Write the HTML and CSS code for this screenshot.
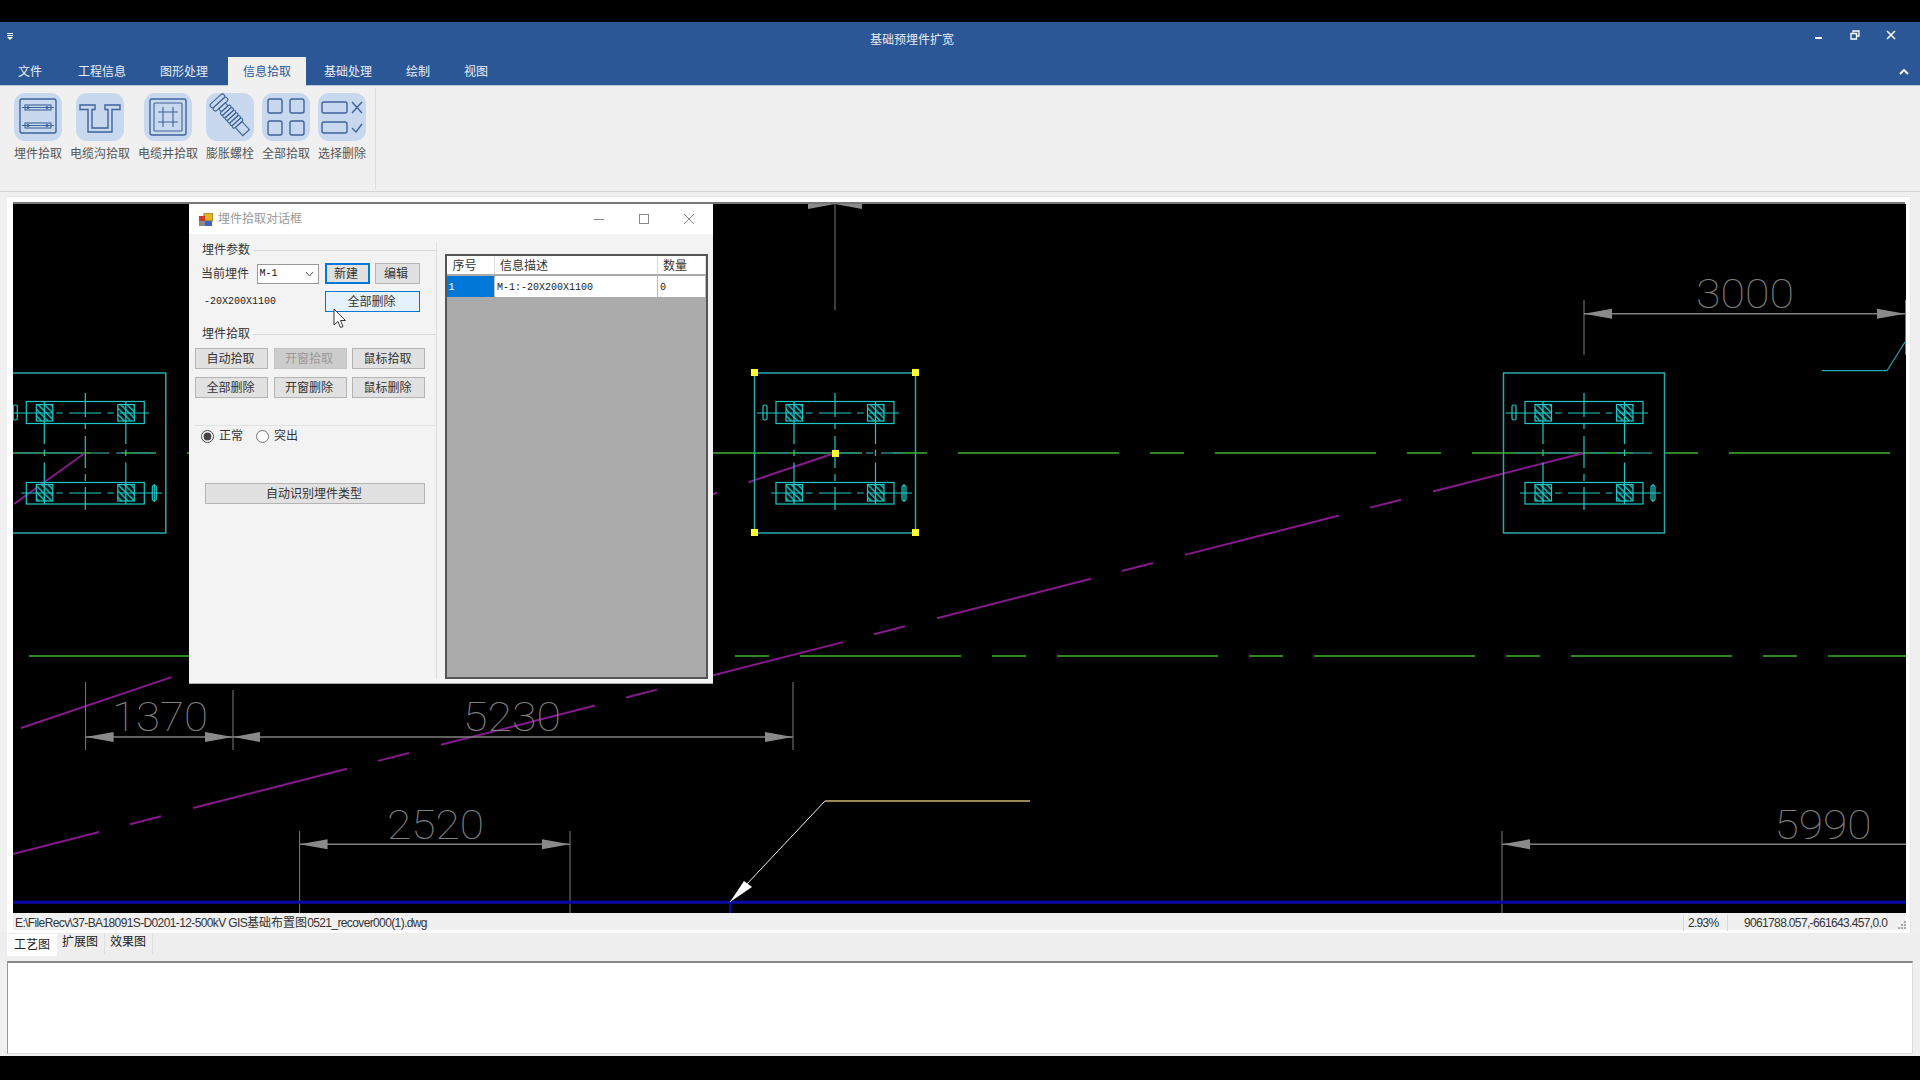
FILE: index.html
```html
<!DOCTYPE html>
<html lang="zh-CN">
<head>
<meta charset="utf-8">
<title>基础预埋件扩宽</title>
<link rel="stylesheet" href="styles.css">
</head>
<body>
<div class="app">
  <header class="titlebar">
    <svg class="qat" width="8" height="8" viewBox="0 0 8 8"><path d="M1 0.5H7M1 2.5H7" stroke="#fff"/><path d="M1 4H7L4 7Z" fill="#fff"/></svg>
    <div class="apptitle">基础预埋件扩宽</div>
    <div class="winctl">
      <svg width="10" height="10" viewBox="0 0 10 10"><path d="M1 8H8" stroke="#fff" stroke-width="2"/></svg>
      <svg width="10" height="10" viewBox="0 0 10 10"><path d="M3 2.5V1H9V6H7M1 3.5H6.5V9H1Z" fill="none" stroke="#fff" stroke-width="1.3"/></svg>
      <svg width="10" height="10" viewBox="0 0 10 10"><path d="M1 1L9 9M9 1L1 9" stroke="#fff" stroke-width="1.5"/></svg>
    </div>
  </header>
  <nav class="tabs">
    <span class="tab t1">文件</span>
    <span class="tab t2">工程信息</span>
    <span class="tab t3">图形处理</span>
    <span class="tab active">信息拾取</span>
    <span class="tab t5">基础处理</span>
    <span class="tab t6">绘制</span>
    <span class="tab t7">视图</span>
    <svg class="collapse" width="10" height="6" viewBox="0 0 10 6"><path d="M1 5L5 1L9 5" fill="none" stroke="#fff" stroke-width="2"/></svg>
  </nav>
  <section class="ribbon">
    <div class="rgroup">
      <div class="ritem">
        <svg class="ricon" viewBox="0 0 48 48"><rect class="ibg" width="48" height="48" rx="11"/><rect class="ist" x="6" y="6" width="36" height="34" rx="2"/><rect class="ist1" x="11" y="12" width="26" height="5"/><path class="ist1" d="M8 14.500H40M8 32.500H40"/><rect class="ist1" x="11" y="30" width="26" height="5"/><circle class="idot" cx="14" cy="14.500" r="1.500"/><circle class="idot" cx="33" cy="14.500" r="1.500"/><circle class="idot" cx="14" cy="32.500" r="1.500"/><circle class="idot" cx="33" cy="32.500" r="1.500"/></svg>
        <span class="rlabel">埋件拾取</span>
      </div>
      <div class="ritem">
        <svg class="ricon" viewBox="0 0 48 48"><rect class="ibg" width="48" height="48" rx="11"/><path class="ist" d="M4 12H19V16.500H16V35H32V16.500H29V12H44V16.500H36V39H12V16.500H4Z"/></svg>
        <span class="rlabel">电缆沟拾取</span>
      </div>
      <div class="ritem">
        <svg class="ricon" viewBox="0 0 48 48"><rect class="ibg" width="48" height="48" rx="11"/><rect class="ist" x="6" y="6" width="36" height="36" rx="2"/><rect class="ist1" x="10" y="10" width="28" height="28" rx="1"/><path class="ist1" d="M19 14V34M29 14V34M14 19H34M14 29H34"/></svg>
        <span class="rlabel">电缆井拾取</span>
      </div>
      <div class="ritem">
        <svg class="ricon" viewBox="0 0 48 48"><rect class="ibg" width="48" height="48" rx="11"/><g transform="translate(26 24) rotate(48)"><rect class="ist1" x="-24" y="-9" width="4.500" height="18" rx="2.200"/><rect class="ist1" x="-19.500" y="-9" width="4.500" height="18" rx="2.200"/><rect class="ist1" x="-15" y="-4.500" width="4" height="9"/><rect class="ist1" x="-11" y="-6.500" width="3.500" height="13" rx="1.700"/><rect class="ist1" x="-7.500" y="-6.500" width="3.500" height="13" rx="1.700"/><rect class="ist1" x="-4" y="-6.500" width="3.500" height="13" rx="1.700"/><rect class="ist1" x="-0.500" y="-6.500" width="3.500" height="13" rx="1.700"/><rect class="ist1" x="3" y="-6.500" width="3.500" height="13" rx="1.700"/><rect class="ist1" x="6.500" y="-6.500" width="3.500" height="13" rx="1.700"/><rect class="ist1" x="10" y="-4.500" width="11" height="9"/></g></svg>
        <span class="rlabel">膨胀螺栓</span>
      </div>
      <div class="ritem">
        <svg class="ricon" viewBox="0 0 48 48"><rect class="ibg" width="48" height="48" rx="11"/><rect class="ist" x="6" y="6" width="14" height="14" rx="2"/><rect class="ist" x="28" y="6" width="14" height="14" rx="2"/><rect class="ist" x="6" y="28" width="14" height="14" rx="2"/><rect class="ist" x="28" y="28" width="14" height="14" rx="2"/></svg>
        <span class="rlabel">全部拾取</span>
      </div>
      <div class="ritem">
        <svg class="ricon" viewBox="0 0 48 48"><rect class="ibg" width="48" height="48" rx="11"/><rect class="ist" x="4" y="9" width="25" height="11" rx="2"/><rect class="ist" x="4" y="29" width="25" height="11" rx="2"/><path class="ist" d="M34 9L44 20M44 9L34 20M34 35L38 39L44 31"/></svg>
        <span class="rlabel">选择删除</span>
      </div>
    </div>
  </section>
  <main class="panel">
    <div class="stage">
      <svg class="cad" viewBox="13 204 1893 709" width="1893" height="709">
        <defs>
          <pattern id="hatch" width="4.500" height="4.500" patternUnits="userSpaceOnUse" patternTransform="rotate(-45)">
            <rect width="4.500" height="4.500" fill="#021414"/>
            <rect width="1.500" height="4.500" fill="#1ab4b4"/>
          </pattern>
          <g id="block">
            <path class="grn-ov" d="M-68 0H-46M-38 0H-6M6 0H24M31 0H38M46 0H68"/>
            <rect class="cy-o" x="-80.500" y="-80" width="161" height="160"/>
            <rect class="cy" x="-59" y="-51.500" width="118" height="22"/>
            <rect class="cy" x="-59" y="29.500" width="118" height="21.500"/>
            <rect class="hat" x="-49" y="-48.500" width="16.500" height="16.500"/>
            <rect class="hat" x="32.500" y="-48.500" width="16.500" height="16.500"/>
            <rect class="hat" x="-49" y="31.500" width="16.500" height="16.500"/>
            <rect class="hat" x="32.500" y="31.500" width="16.500" height="16.500"/>
            <path class="cy" d="M-78 -40H-32M-29 -40H-22.500M-16 -40H16M22 -40H28.500M34.500 -40H64"/>
            <path class="cy" d="M-64 40H-32M-29 40H-22.500M-16 40H16M22 40H28.500M34.500 40H77"/>
            <path class="cy" d="M-41 -51V-9M-41 -3.500V3M-41 9.500V51M40.500 -51V-9M40.500 -3.500V3M40.500 9.500V51"/>
            <path class="cy" d="M0 -60V-36M0 -30V-24M0 -17V15M0 21V28M0 34V57"/>
            <rect class="cy" x="-72" y="-48" width="4" height="15" rx="1.500"/>
            <rect class="cy" x="67" y="32.500" width="4" height="15" rx="1.500"/>
            <path class="cy" d="M69 31V49"/>
          </g>
        </defs>
        <path class="green" d="M-70 453H1906"/>
        <path class="green" d="M29 656H1906"/>
        <path class="purple" d="M-55 871.400L1584 453"/>
        <path class="purple" d="M21 728L835 453"/>
        <path class="purple solid" d="M14 504L85 453"/>
        <use href="#block" x="85.300" y="453"/>
        <use href="#block" x="835" y="453"/>
        <use href="#block" x="1584" y="453"/>
        <g class="handles">
          <rect x="751" y="369" width="7" height="7"/><rect x="912" y="369" width="7" height="7"/>
          <rect x="751" y="529" width="7" height="7"/><rect x="912" y="529" width="7" height="7"/>
          <rect x="832" y="450" width="7" height="7"/>
        </g>
        <path class="ext" d="M835 204V310M1584 300V355M1905.500 300V355M85.600 682V750M233 690V750M793 682V750M299.600 831V913M570 831V913M1502 831V913"/>
        <path class="dim" d="M1584 313.700H1905M85.600 737H793M299.600 844.300H570M1502 844.300H1906"/>
        <g class="arrow">
          <path d="M808 204H835L808 209ZM862 204H835L862 209Z"/>
          <path d="M1584 313.700L1612 308.700V318.700ZM1905 313.700L1877 308.700V318.700Z"/>
          <path d="M85.600 737L113.600 732V742ZM233 737L205 732V742ZM233 737L260 732V742ZM793 737L765 732V742Z"/>
          <path d="M299.600 844.300L327.600 839.300V849.300ZM570 844.300L542 839.300V849.300Z"/>
          <path d="M1502 844.300L1530 839.300V849.300Z"/>
        </g>
        <text class="dimtext" x="1696" y="307.500" textLength="98" lengthAdjust="spacingAndGlyphs">3000</text>
        <text class="dimtext" x="112" y="731" textLength="96" lengthAdjust="spacingAndGlyphs">1370</text>
        <text class="dimtext" x="463" y="731" textLength="98" lengthAdjust="spacingAndGlyphs">5230</text>
        <text class="dimtext" x="387" y="839" textLength="97" lengthAdjust="spacingAndGlyphs">2520</text>
        <text class="dimtext" x="1774.500" y="839" textLength="97" lengthAdjust="spacingAndGlyphs">5990</text>
        <path class="teal" d="M1821.600 370.700H1887L1905 342"/>
        <path class="bluebar" d="M13 902.300H1906"/>
        <path class="bluetick" d="M730 902V913"/>
        <path class="yellow" d="M825 801H1030"/>
        <path class="leader" d="M730 902L825 801"/>
        <path class="head" d="M730 902L744 881L752 887Z"/>
      </svg>
      <section class="dialog">
        <div class="dtitle">
          <svg class="dicon" width="14" height="13" viewBox="0 0 14 13"><rect x="5" y="0" width="9" height="8" fill="#e6b422" stroke="#7a6a30" stroke-width=".8"/><rect x="0" y="3" width="6" height="5" fill="#d03a2a"/><rect x="0" y="8" width="6" height="5" fill="#8a8a8a"/><rect x="6" y="8" width="7" height="5" fill="#3a66c0"/></svg>
          <span class="dname">埋件拾取对话框</span>
          <div class="dctl">
            <svg width="12" height="12" viewBox="0 0 12 12"><path d="M1 6.500H11" stroke="#888"/></svg>
            <svg width="12" height="12" viewBox="0 0 12 12"><rect x="1.500" y="1.500" width="9" height="9" fill="none" stroke="#888"/></svg>
            <svg width="12" height="12" viewBox="0 0 12 12"><path d="M1 1L11 11M11 1L1 11" stroke="#888"/></svg>
          </div>
        </div>
        <div class="dbody">
          <div class="dleft">
            <div class="legend legend-a"><span>埋件参数</span></div>
            <div class="prow prow1">
              <span class="plabel">当前埋件</span>
              <div class="combo"><span>M-1</span><svg width="9" height="6" viewBox="0 0 9 6"><path d="M1 1L4.500 5L8 1" fill="none" stroke="#555"/></svg></div>
              <button class="btn btn-new">新建</button>
              <button class="btn btn-edit">编辑</button>
            </div>
            <div class="prow prow2">
              <span class="spec">-20X200X1100</span>
              <button class="btn btn-hover">全部删除</button>
            </div>
            <div class="legend legend-b"><span>埋件拾取</span></div>
            <div class="grid3">
              <button class="btn">自动拾取</button>
              <button class="btn disabled">开窗拾取</button>
              <button class="btn">鼠标拾取</button>
              <button class="btn">全部删除</button>
              <button class="btn">开窗删除</button>
              <button class="btn">鼠标删除</button>
            </div>
            <div class="radios">
              <label class="radio"><input type="radio" name="mode" checked>正常</label>
              <label class="radio"><input type="radio" name="mode">突出</label>
            </div>
            <button class="btn btn-auto">自动识别埋件类型</button>
          </div>
          <div class="dright">
            <div class="tablebox">
              <table class="grid">
                <colgroup><col class="c1"><col class="c2"><col class="c3"></colgroup>
                <thead><tr><th>序号</th><th>信息描述</th><th>数量</th></tr></thead>
                <tbody><tr><td class="sel">1</td><td class="mono">M-1:-20X200X1100</td><td class="mono">0</td></tr></tbody>
              </table>
            </div>
          </div>
        </div>
      </section>
      <svg class="cursor" width="14" height="21" viewBox="0 0 14 21"><path d="M1 1V17L5 13.500L7.500 19.500L10 18.500L7.500 12.500H12.500Z" fill="#fff" stroke="#333"/></svg>
    </div>
    <footer class="status">
      <span class="path">E:\FileRecv\37-BA18091S-D0201-12-500kV GIS<span class="cjk">基础布置图</span>0521_recover000(1).dwg</span>
      <span class="zoomv">2.93%</span>
      <span class="coord">9061788.057,-661643.457,0.0</span>
      <svg class="grip" width="9" height="9" viewBox="0 0 9 9"><path d="M7 1h2v2h-2zM4 4h2v2h-2zM7 4h2v2h-2zM1 7h2v2h-2zM4 7h2v2h-2zM7 7h2v2h-2z" fill="#aaa"/></svg>
    </footer>
  </main>
  <div class="btabs">
    <span class="btab on">工艺图</span>
    <span class="btab">扩展图</span>
    <span class="btab">效果图</span>
  </div>
  <div class="output"></div>
</div>
</body>
</html>
```
FILE: styles.css
```css
* { box-sizing: border-box; }
html, body { margin: 0; height: 100%; background: #000; overflow: hidden; }
body { font: 12px/16px "Liberation Sans", "Noto Sans CJK SC", sans-serif; color: #333; }
.app { margin-top: 22px; height: 1034px; background: #f0f0f0; display: flex; flex-direction: column; }

.titlebar { height: 35px; flex: none; background: #2b5797; display: flex; align-items: center; position: relative; padding-left: 6px; }
.qat { margin-top: -5px; }
.apptitle { position: absolute; left: 0; width: 1824px; text-align: center; color: #e6ebf3; }
.winctl { position: absolute; left: 1814px; top: 8px; display: flex; gap: 26px; }

.tabs { height: 29px; flex: none; background: #2b5797; display: flex; align-items: flex-start; position: relative; border-bottom: 1px solid #b9c8e0; color: #e8edf5; }
.tab { height: 27px; line-height: 25px; padding-top: 2px; margin-top: 1px; }
.t1 { margin-left: 18px; }
.t2 { margin-left: 36px; }
.t3 { margin-left: 34px; }
.active { margin: 0 0 -1px 20px; width: 78px; height: 29px; padding-top: 3px; background: #f0f0f0; color: #2b5797; text-align: center; }
.t5 { margin-left: 18px; }
.t6 { margin-left: 34px; }
.t7 { margin-left: 34px; }
.collapse { position: absolute; left: 1899px; top: 12px; }

.ribbon { height: 106px; flex: none; padding: 2px 4px 2px 14px; border-bottom: 1px solid #d6d6d6; background: #f0f0f0; }
.rgroup { height: 100%; width: 362px; padding-top: 5px; display: flex; gap: 8px; border-right: 1px solid #dcdcdc; }
.ritem { display: flex; flex-direction: column; align-items: center; }
.ricon { width: 48px; height: 48px; display: block; }
.rlabel { margin-top: 5px; color: #555; white-space: nowrap; }
.ibg { fill: #c8d9ef; }
.ist { fill: none; stroke: #3f639c; stroke-width: 1.400; }
.ist1 { fill: none; stroke: #3f639c; stroke-width: 1.100; }
.idot { fill: #3f639c; }

.panel { height: 737px; flex: none; margin: 4px 9px 0 7px; padding: 5px 5px 3px 6px; background: #fff; border: 1px solid #e6e6e6; border-width: 1px 1px 0 0; }
.stage { position: relative; border-top: 2px solid #777; height: 711px; }
.cad { display: block; background: #000; }
.green { stroke: #2e8521; stroke-width: 2; fill: none; stroke-dasharray: 161 31 34 31; }
.grn-ov { stroke: #2a8282; stroke-width: 1.600; fill: none; }
.purple { stroke: #851a8a; stroke-width: 2; fill: none; stroke-dasharray: 159 32 32 32.950; }
.solid { stroke-dasharray: none; }
.cy { stroke: #1fc8c8; stroke-width: 1.200; fill: none; }
.cy-o { stroke: #2aa8a8; stroke-width: 1.500; fill: none; }
.hat { fill: url(#hatch); stroke: #1fc8c8; stroke-width: 1.200; }
.handles rect { fill: #ffff33; }
.ext { stroke: #7c7c7c; stroke-width: 1; fill: none; }
.dim { stroke: #808080; stroke-width: 1.400; fill: none; }
.arrow path { fill: #8a8a8a; }
.dimtext { font: 100 40px Roboto, "Liberation Sans", sans-serif; fill: #808080; }
.teal { stroke: #22a8b8; stroke-width: 1.200; fill: none; }
.bluebar { stroke: #0808a8; stroke-width: 3; fill: none; }
.bluetick { stroke: #0808a8; stroke-width: 2; fill: none; }
.yellow { stroke: #c8b868; stroke-width: 1.500; fill: none; }
.leader { stroke: #eee; stroke-width: 1; fill: none; }
.head { fill: #fff; }

.dialog { position: absolute; left: 176px; top: 0; width: 524px; height: 480px; background: #f3f3f3; border-bottom: 1px solid #aaa; display: flex; flex-direction: column; }
.dtitle { height: 30px; flex: none; background: #fff; display: flex; align-items: center; padding-left: 10px; }
.dname { margin-left: 5px; color: #999; }
.dctl { margin: -1px 18px 0 auto; display: flex; gap: 33px; }
.dbody { flex: 1; display: flex; min-height: 0; }
.dleft { width: 254px; flex: none; padding: 8px 0 0 6px; position: relative; }
.dleft::after { content: ""; position: absolute; left: 247px; top: 9px; bottom: 4px; border-left: 1px solid #dedede; }
.legend { display: flex; align-items: center; height: 16px; width: 241px; }
.legend span { margin-left: 7px; padding-right: 3px; }
.legend::after { content: ""; flex: 1; border-top: 1px solid #dadada; }
.legend-b { margin-top: 14px; }
.prow { display: flex; height: 21px; align-items: center; }
.prow1 { margin-top: 5px; padding-left: 6px; }
.prow2 { margin-top: 7px; padding-left: 9px; }
.plabel { width: 55.500px; flex: none; }
.combo { width: 62px; height: 20px; background: #fff; border: 1px solid #999; display: flex; align-items: center; justify-content: space-between; padding: 0 4px 0 2px; font: 10px "Liberation Mono", monospace; color: #111; }
.btn { font: 12px/16px "Liberation Sans", "Noto Sans CJK SC", sans-serif; height: 21px; padding: 0 2px 0 0; background: #e1e1e1; border: 1px solid #b4b4b4; color: #333; display: block; }
.btn-new { width: 45px; margin-left: 6px; border: 2px solid #0078d7; }
.btn-edit { width: 45px; margin-left: 5px; }
.spec { width: 121px; flex: none; font: 10px "Liberation Mono", monospace; color: #222; }
.btn-hover { width: 95px; background: #e5f1fb; border-color: #0078d7; }
.grid3 { display: grid; grid-template-columns: repeat(3, 73px); gap: 8px 5.500px; margin-top: 6px; }
.disabled { background: #ccc; border-color: #c4c4c4; color: #999; }
.radios { display: flex; gap: 13px; margin-top: 27px; padding-left: 6px; border-top: 1px solid #e2e2e2; width: 241px; height: 19px; align-items: flex-end; }
.radio { display: flex; align-items: center; gap: 5px; }
.radio input { margin: 0; width: 13px; height: 13px; accent-color: #444; }
.btn-auto { width: 220px; margin: 39px 0 0 10px; }
.dright { flex: 1; padding: 20px 5px 0 1.500px; }
.tablebox { height: 425px; width: 263px; background: #ababab; border: 2px solid #555; }
.grid { border-collapse: collapse; table-layout: fixed; width: 100%; }
.c1 { width: 48px; }
.c2 { width: 163px; }
.grid th { height: 19px; padding: 1px 0 0 6px; font-weight: 400; text-align: left; background: #fff; border-right: 1px solid #ddd; border-bottom: 2px solid #aaa; color: #333; }
.grid th + th { padding-left: 5px; }
.grid td { height: 22px; padding: 1px 0 0 2px; background: #fff; border-right: 1px solid #bbb; }
.grid .sel { background: #0078d7; color: #fff; font: 10px "Liberation Mono", monospace; }
.mono { font: 10px "Liberation Mono", monospace; color: #222; }
.cursor { position: absolute; left: 320px; top: 104px; }

.status { height: 17px; background: #f0f0f0; position: relative; display: flex; align-items: center; color: #333; padding-top: 2px; }
.path { margin-left: 2px; font-size: 12px; letter-spacing: -.62px; white-space: nowrap; }
.cjk { letter-spacing: 0; }
.zoomv { position: absolute; left: 1670px; width: 45px; padding-left: 4px; letter-spacing: -.7px; border-left: 1px solid #d8d8d8; border-right: 1px solid #d8d8d8; }
.coord { position: absolute; left: 1731px; letter-spacing: -.65px; white-space: nowrap; }
.grip { position: absolute; left: 1884px; top: 7px; }

.btabs { height: 28px; flex: none; display: flex; background: #eee; }
.btab { width: 48px; padding: 1px 0 0 5px; height: 21px; border-right: 1px solid #e0e0e0; color: #222; }
.btab.on { width: 50px; margin: 1px 0 0 7px; background: #fff; padding: 3px 0 0 7px; border: 0; height: 22px; }
.output { height: 93px; flex: none; margin: 0 7px 2px 7px; background: #fff; border-top: 2px solid #888; border-left: 1px solid #999; border-right: 1px solid #ddd; border-bottom: 1px solid #ddd; }
```
